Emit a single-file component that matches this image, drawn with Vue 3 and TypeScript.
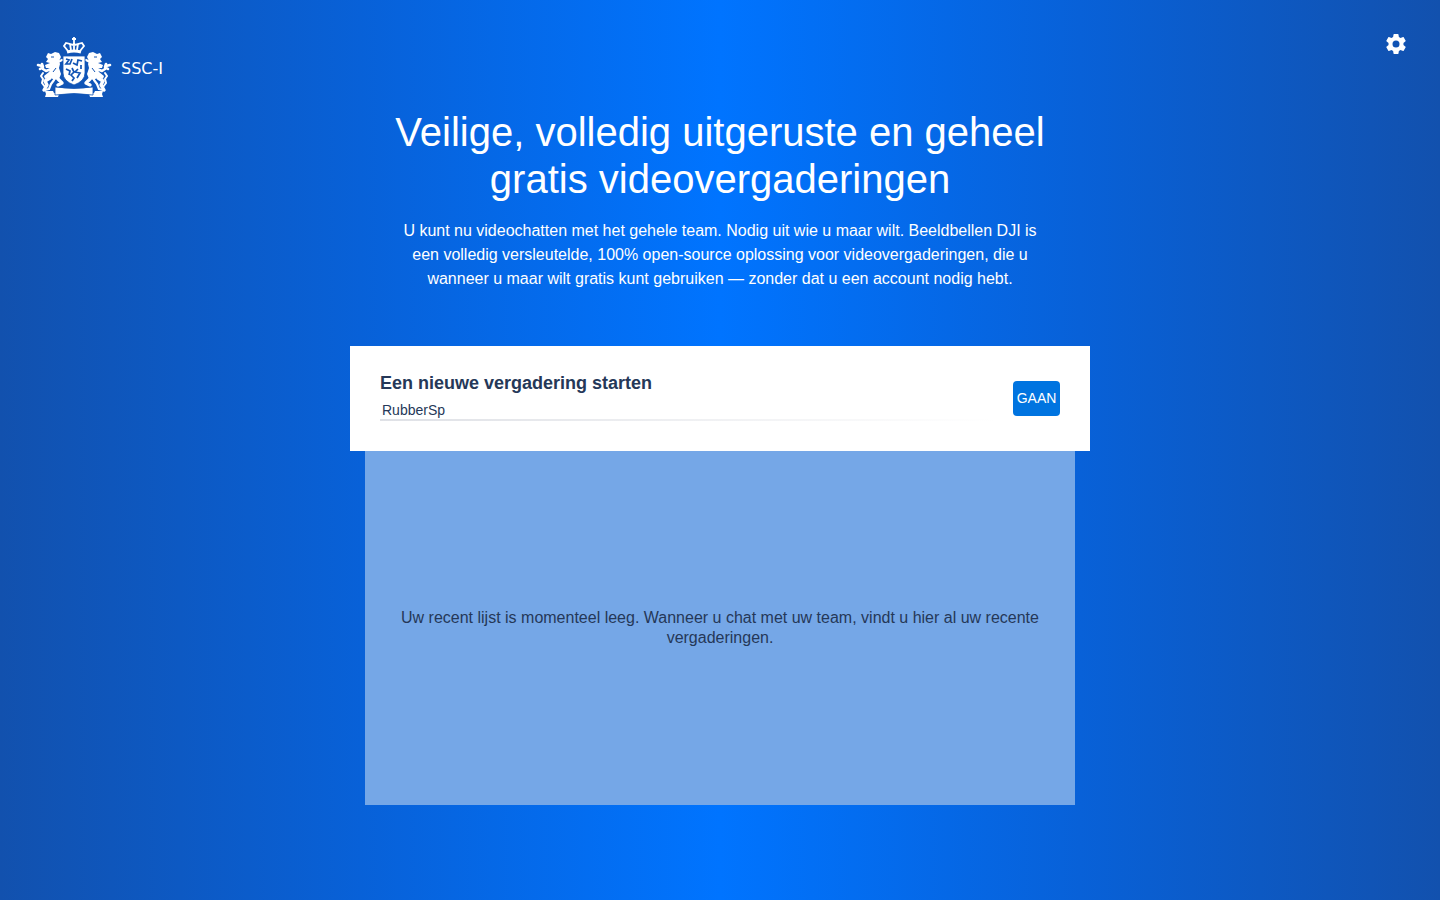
<script setup lang="ts">
import { ref } from 'vue'

const room = ref('RubberSp')
</script>

<template>
  <div class="welcome">
    <header class="topbar">
      <a class="brand" href="#" aria-label="SSC-I">
        <svg class="crest" viewBox="0 0 76 62" aria-hidden="true">
          <g id="lion">
            <!-- head, mane and torso -->
            <path fill="#fff" d="M12 17l3 1 4-2 4 1 2 4-2 4 1 3-1 4 2 6-2 5-5 1-4-3-5 2-1-3 5-4 2-4-5 0-1-3 5-2-4-1 2-3-2-2z" />
            <!-- raised paw, tail and hind legs -->
            <g fill="none" stroke="#fff" stroke-linecap="round" stroke-linejoin="round">
              <path stroke-width="2.6" d="M15 33l-5 2-3-2-1-3-4-1M6 28l1 3-3 2" />
              <path stroke-width="2" d="M9 51l-3-4 1-4-2-3 2-3" />
              <path stroke-width="3.4" d="M14 42l-5 3 2 4-3 5M22 43l4 4-4 2" />
              <path stroke-width="2.2" d="M18 44l-3 4-2 5-4 1M22 26l4-2" />
            </g>
            <path fill="none" stroke="#1254b4" stroke-width="1" d="M15 21h3M20 32l-3 4" />
            <path fill="#fff" d="M9 55h8l1 2 5 1-1 3H9l1-3z" />
          </g>
          <use href="#lion" transform="matrix(-1 0 0 1 76 0)" />
          <path fill="#fff" stroke="#1254b4" stroke-width=".8" d="M27 20h22v17q0 8-11 12-11-4-11-12z" />
          <path fill="none" stroke="#1254b4" stroke-width="1.7" d="M30 23l3 1-3 4h4l2-5M37 27l4 2 1-5 4 1M30 33l4 2-1 4M36 32l2 4-3 3 3 3-2 3M42 33l-3 3 5 1-3 5M45 29v4" />
          <g fill="none" stroke="#fff" stroke-width="1.8">
            <path d="M32 15l-4-5 2-3 4 1 1 6M44 15l4-5-2-3-4 1-1 6M38 6v9M36 3h4M38 1v5M33 8l5 1 5-1" />
            <path stroke-width="3" d="M31 16q7-2 14 0" />
          </g>
          <path fill="#fff" stroke="#1254b4" stroke-width=".8" d="M19 51q19 3 38 0v8q-19-3-38 0z" />
        </svg>
        <span>SSC-I</span>
      </a>
      <button class="settings" type="button" aria-label="Instellingen">
        <svg viewBox="0 0 24 24" aria-hidden="true">
          <path fill="#fff" d="M19.43 12.98c.04-.32.07-.64.07-.98s-.03-.66-.07-.98l2.11-1.65c.19-.15.24-.42.12-.64l-2-3.46c-.12-.22-.39-.3-.61-.22l-2.49 1c-.52-.4-1.08-.73-1.69-.98l-.38-2.65A.49.49 0 0 0 14 2h-4a.49.49 0 0 0-.49.42l-.38 2.65c-.61.25-1.17.59-1.69.98l-2.49-1c-.23-.09-.49 0-.61.22l-2 3.46c-.13.22-.07.49.12.64l2.11 1.65c-.04.32-.07.65-.07.98s.03.66.07.98l-2.11 1.65c-.19.15-.24.42-.12.64l2 3.46c.12.22.39.3.61.22l2.49-1c.52.4 1.08.73 1.69.98l.38 2.65c.03.24.24.42.49.42h4c.25 0 .46-.18.49-.42l.38-2.65c.61-.25 1.17-.59 1.69-.98l2.49 1c.23.09.49 0 .61-.22l2-3.46c.12-.22.07-.49-.12-.64zM12 15.5a3.5 3.5 0 1 1 0-7 3.5 3.5 0 0 1 0 7z" />
        </svg>
      </button>
    </header>

    <main>
      <section class="intro">
        <h1>Veilige, volledig uitgeruste en geheel gratis videovergaderingen</h1>
        <p>U kunt nu videochatten met het gehele team. Nodig uit wie u maar wilt. Beeldbellen DJI is een volledig versleutelde, 100% open-source oplossing voor videovergaderingen, die u wanneer u maar wilt gratis kunt gebruiken — zonder dat u een account nodig hebt.</p>
      </section>

      <form class="start" @submit.prevent>
        <div class="field">
          <label for="room">Een nieuwe vergadering starten</label>
          <input id="room" v-model="room" type="text" autocomplete="off" />
        </div>
        <button class="go" type="submit">GAAN</button>
      </form>

      <section class="recent">
        <p>Uw recent lijst is momenteel leeg. Wanneer u chat met uw team, vindt u hier al uw recente vergaderingen.</p>
      </section>
    </main>
  </div>
</template>

<style>
body {
  margin: 0;
}
</style>

<style scoped>
.welcome {
  box-sizing: border-box;
  min-height: 100vh;
  padding-bottom: 95px;
  background: linear-gradient(90deg, #1251ae 0%, #0861d8 25%, #0074ff 50%, #0861d8 75%, #1251ae 100%);
  color: #fff;
  font-family: "Liberation Sans", Arial, sans-serif;
}

.topbar {
  display: flex;
  align-items: flex-start;
  justify-content: space-between;
  height: 109px;
  padding: 32px 32px 0 36px;
  box-sizing: border-box;
}

.brand {
  display: flex;
  align-items: center;
  gap: 9px;
  padding-top: 4px;
  color: #fff;
  font: 16px/20px "DejaVu Sans", sans-serif;
  text-decoration: none;
}

.brand span {
  padding-top: 4px;
}

.crest {
  width: 76px;
  height: 62px;
}

.settings {
  width: 24px;
  height: 24px;
  padding: 0;
  border: 0;
  background: none;
  cursor: pointer;
}

.settings svg {
  display: block;
}

.intro {
  max-width: 650px;
  margin: 0 auto;
  text-align: center;
}

h1 {
  margin: 0 0 16px;
  font-size: 40px;
  font-weight: 400;
  line-height: 47px;
}

.intro p {
  margin: 0;
  font-size: 16px;
  line-height: 24px;
}

.start {
  display: flex;
  align-items: center;
  box-sizing: border-box;
  max-width: 740px;
  height: 105px;
  margin: 55px auto 0;
  padding: 0 30px;
  background: #fff;
  color: #253858;
}

.field {
  flex: 1;
  margin-right: 16px;
  padding-bottom: 4px;
}

.field label {
  display: block;
  margin-bottom: 8px;
  font-size: 18px;
  font-weight: 700;
  line-height: 20px;
}

.field input {
  display: block;
  box-sizing: border-box;
  width: 100%;
  height: 20px;
  padding: 0 2px 2px;
  border: 0;
  outline: 0;
  background: linear-gradient(90deg, #dfe1e6, #fff) bottom / 100% 2px no-repeat;
  color: #253858;
  font: 14px/18px "Liberation Sans", Arial, sans-serif;
}

.go {
  width: 47px;
  height: 35px;
  padding: 0;
  border: 0;
  border-radius: 4px;
  background: #0074e0;
  color: #fff;
  font: 14px/35px "Liberation Sans", Arial, sans-serif;
  cursor: pointer;
}

.recent {
  display: flex;
  align-items: center;
  box-sizing: border-box;
  max-width: 710px;
  min-height: 354px;
  margin: 0 auto;
  padding: 0 30px;
  background: #75a7e7;
  color: #253858;
  text-align: center;
}

.recent p {
  margin: 0;
  font-size: 16px;
  line-height: 20px;
}
</style>
